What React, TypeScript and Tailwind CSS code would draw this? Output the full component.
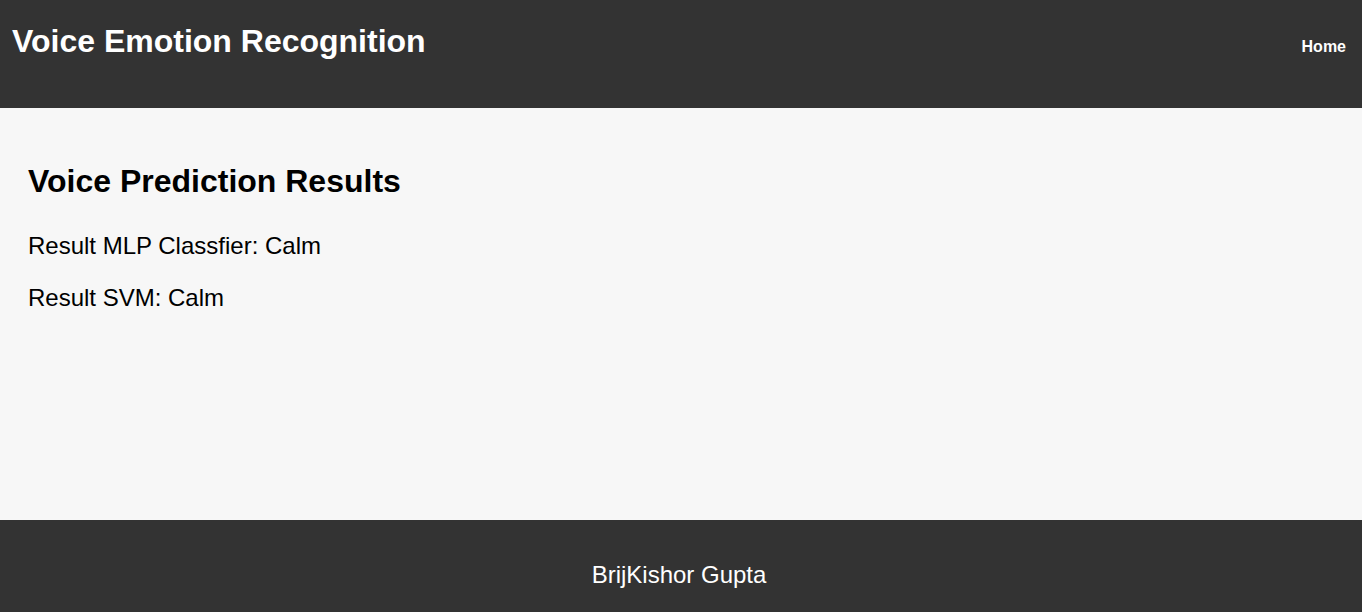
import React from "react";

export default function App() {
  return (
    <div className="min-h-[612px] flex flex-col font-['Liberation_Sans',Arial,sans-serif]">
      <header className="h-[108px] bg-[#333333] text-white flex justify-between items-start pl-3 pr-4">
        <h1 className="mt-[23px] text-[32px] leading-[37px] font-bold">Voice Emotion Recognition</h1>
        <nav className="mt-[38px] text-[16px] leading-[18px] font-bold">
          <a href="#">Home</a>
        </nav>
      </header>
      <main className="h-[412px] bg-[#f7f7f7] text-black px-[28px] pt-[55px]">
        <h2 className="text-[32px] leading-[37px] font-bold">Voice Prediction Results</h2>
        <p className="mt-[32px] text-[24px] leading-[28px]">Result MLP Classfier: Calm</p>
        <p className="mt-[24px] text-[24px] leading-[28px]">Result SVM: Calm</p>
      </main>
      <footer className="h-[92px] bg-[#333333] text-white flex justify-center pt-[41px] pr-[4px]">
        <p className="text-[24px] leading-[28px]">BrijKishor Gupta</p>
      </footer>
    </div>
  );
}
